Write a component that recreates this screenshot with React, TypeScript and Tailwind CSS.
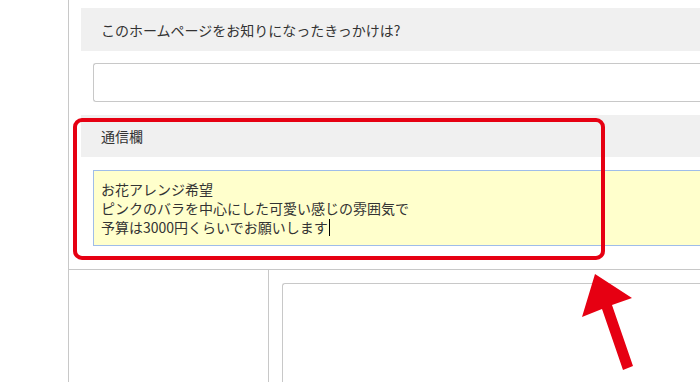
import React from "react";

export default function App() {
  return (
    <div
      className="relative w-[700px] h-[382px] overflow-hidden bg-white text-[#333] text-[14px]"
      style={{ fontFamily: '"Noto Sans CJK JP", "Noto Sans", sans-serif' }}
    >
      <div className="flex h-full">
        <div className="w-[68px] shrink-0" />
        <div className="flex-1 border-l border-[#c8c8c8] flex flex-col">
          <div className="pl-[12px] pt-[8px]">
            <div className="h-[43px] bg-[#f0f0f0] pl-[20px] flex items-center">
              <span className="leading-[20px]">このホームページをお知りになったきっかけは?</span>
            </div>
            <div className="ml-[12px] mt-[12px] h-[39px] border border-[#c8c8c8] rounded-l-[3px] border-r-0 bg-white" />
            <div className="mt-[13px] h-[42px] bg-[#f0f0f0] pl-[20px] flex items-center">
              <span className="leading-[20px]">通信欄</span>
            </div>
            <div className="ml-[12px] mt-[13px] h-[76px] border border-[#9fbde9] border-r-0 bg-[#ffffcc] pl-[7px] pt-[9px] leading-[19px]">
              <div>お花アレンジ希望</div>
              <div>ピンクのバラを中心にした可愛い感じの雰囲気で</div>
              <div className="flex items-center">
                予算は3000円くらいでお願いします
                <span className="inline-block w-[1px] h-[17px] bg-black ml-[1px]" />
              </div>
            </div>
          </div>
          <div className="mt-[23px] border-t border-[#c8c8c8] flex flex-1">
            <div className="w-[200px] border-r border-[#c8c8c8]" />
            <div className="flex-1 pl-[13px] pt-[13px]">
              <div className="h-full border border-[#c8c8c8] border-r-0 border-b-0 rounded-tl-[3px]" />
            </div>
          </div>
        </div>
      </div>

      <div className="absolute left-[73px] top-[118px] w-[532px] h-[142px] border-[4px] border-[#e60012] rounded-[9px] pointer-events-none" />

      <svg
        className="absolute left-0 top-0 pointer-events-none"
        width="700"
        height="382"
        viewBox="0 0 700 382"
      >
        <polygon
          points="595,274 632,298 612,305 633,366 623,370 602,309 582,317"
          fill="#e60012"
        />
      </svg>
    </div>
  );
}
